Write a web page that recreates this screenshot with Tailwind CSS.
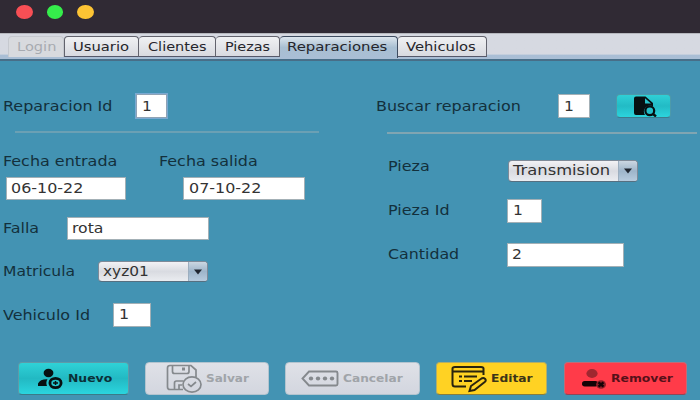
<!DOCTYPE html>
<html lang="es">
<head>
<meta charset="utf-8">
<title>Reparaciones</title>
<script src="https://cdn.jsdelivr.net/npm/@tailwindcss/browser@4"></script>
</head>
<body class="w-[700px] h-[400px] overflow-hidden bg-[#4393b3] font-['DejaVu_Sans',sans-serif] text-[13.2px] leading-none text-[#13303c] whitespace-nowrap">
<div class="flex flex-col h-[400px]">
  <header class="h-[33px] shrink-0 bg-[#302a34] flex gap-[14px] pl-4 pt-[5px]">
    <i class="w-[16.5px] h-[14px] rounded-[50%] bg-[#f84f55]"></i>
    <i class="w-[16.5px] h-[14px] rounded-[50%] bg-[#35ed4b]"></i>
    <i class="w-[16.5px] h-[14px] rounded-[50%] bg-[#fdc434]"></i>
  </header>
  <nav class="h-[28px] shrink-0 bg-linear-to-b from-[#d6d9e1] from-80% to-[#a9bed5] to-85% border-t border-[#b5b7bd] border-b-2 border-b-[#486e88] pt-[2px] pl-2 flex text-[12.4px] text-[#25252b]">
    <div class="w-[56px] h-[21px] rounded-t-[4px] border border-[#c6c9cf] border-b-0 bg-[#d8dade] text-[#a7aab0] pl-2 pt-[4px]"><span class="inline-block origin-left scale-x-[1.18]">Login</span></div>
    <div class="w-[75px] h-[21px] rounded-t-[4px] border border-[#62636d] border-b-[#55586a] bg-linear-to-b from-[#f0f1f3] to-[#d8dae0] pl-2 pt-[4px]"><span class="inline-block origin-left scale-x-[1.19]">Usuario</span></div>
    <div class="w-[77px] h-[21px] rounded-t-[4px] border border-l-0 border-[#62636d] border-b-[#55586a] bg-linear-to-b from-[#f0f1f3] to-[#d8dae0] pl-[9px] pt-[4px]"><span class="inline-block origin-left scale-x-[1.17]">Clientes</span></div>
    <div class="w-[64px] h-[21px] rounded-t-[4px] border border-l-0 border-[#62636d] border-b-[#55586a] bg-linear-to-b from-[#f0f1f3] to-[#d8dae0] pl-[9px] pt-[4px]"><span class="inline-block origin-left scale-x-[1.16]">Piezas</span></div>
    <div class="w-[118px] h-[22px] rounded-t-[4px] border border-l-0 border-b-0 border-[#3e4c60] bg-linear-to-b from-[#dce5ed] via-[#a8bfd2] via-50% to-[#a9bed5] pl-[7px] pt-[4px]"><span class="inline-block origin-left scale-x-[1.2]">Reparaciones</span></div>
    <div class="w-[89px] h-[21px] rounded-t-[4px] border border-l-0 border-[#62636d] border-b-[#55586a] bg-linear-to-b from-[#f0f1f3] to-[#d8dae0] pl-[8px] pt-[4px]"><span class="inline-block origin-left scale-x-[1.19]">Vehiculos</span></div>
  </nav>

  <main class="flex h-[301px] shrink-0">
    <section class="w-[376px] pl-[3px] pt-[33px]">
      <div class="flex items-center h-[24px]">
        <label class="w-[133px] pt-px"><span class="inline-block origin-left scale-x-[1.21]">Reparacion Id</span></label>
        <div class="w-[31px] h-[24px] bg-white border border-[#8fa3b5] ring-1 ring-[#79a9d2] pl-[5px] pt-[5px] text-[#333]"><span class="inline-block origin-left scale-x-[1.18]">1</span></div>
      </div>
      <div class="ml-3 mt-[13px] w-[304px] h-[2px] bg-[#6ba0b4]"></div>
      <div class="flex mt-[21px] h-[16px] pt-px">
        <label class="w-[156px]"><span class="inline-block origin-left scale-x-[1.21]">Fecha entrada</span></label>
        <label><span class="inline-block origin-left scale-x-[1.21]">Fecha salida</span></label>
      </div>
      <div class="flex mt-[7px] ml-[3px] gap-[57px] text-[13.5px] text-[#333]">
        <div class="w-[120px] h-[23px] bg-white border border-[#a3b0b6] pl-1 pt-[4px]"><span class="inline-block origin-left scale-x-[1.18]">06-10-22</span></div>
        <div class="w-[122px] h-[23px] bg-white border border-[#a3b0b6] pl-[5px] pt-[4px]"><span class="inline-block origin-left scale-x-[1.18]">07-10-22</span></div>
      </div>
      <div class="flex items-center mt-[17px] h-[23px]">
        <label class="w-[64px] pt-px"><span class="inline-block origin-left scale-x-[1.21]">Falla</span></label>
        <div class="w-[142px] h-[23px] bg-white border border-[#a3b0b6] pl-1 pt-[4px] text-[13.5px] text-[#333]"><span class="inline-block origin-left scale-x-[1.16]">rota</span></div>
      </div>
      <div class="flex items-center mt-[21px] h-[21px]">
        <label class="w-[95px] pt-px"><span class="inline-block origin-left scale-x-[1.18]">Matricula</span></label>
        <div class="w-[110px] h-[21px] rounded-[4px] border border-[#7e8a98] border-b-[#566f80] bg-linear-to-b from-[#f2f2f5] via-[#d9dbe1] to-[#eaecf0] flex overflow-hidden text-[13.5px] text-[#333]">
          <div class="flex-1 pl-1 pt-[3px]"><span class="inline-block origin-left scale-x-[1.14]">xyz01</span></div>
          <div class="w-[19px] bg-linear-to-b from-[#cbd7e2] via-[#9eb5ca] to-[#b7cbde] border-l border-[#9caebf] flex items-center justify-center"><svg width="8" height="6" viewBox="0 0 8 6"><path d="M0 .5h8L4 5.5z" fill="#202630"/></svg></div>
        </div>
      </div>
      <div class="flex items-center mt-[21px] h-[24px]">
        <label class="w-[110px] pt-px"><span class="inline-block origin-left scale-x-[1.21]">Vehiculo Id</span></label>
        <div class="w-[38px] h-[24px] bg-white border border-[#a3b0b6] pl-[5px] pt-[4px] text-[13.5px] text-[#333]"><span class="inline-block origin-left scale-x-[1.18]">1</span></div>
      </div>
    </section>

    <section class="w-[324px] pt-[33px]">
      <div class="flex items-center h-[24px]">
        <label class="w-[182px] pt-px"><span class="inline-block origin-left scale-x-[1.21]">Buscar reparacion</span></label>
        <div class="w-[32px] h-[24px] bg-white border border-[#a3b0b6] pl-[5px] pt-[5px] text-[#333]"><span class="inline-block origin-left scale-x-[1.18]">1</span></div>
        <div class="ml-[26px] w-[55px] h-[24px] rounded-[4px] border border-[#4d9aaa] border-b-[#3c7c8d] bg-linear-to-b from-[#2fd0d6] via-[#22bbc5] to-[#2cd4dd] flex items-center justify-center pl-[3px]">
          <svg width="24" height="21" viewBox="0 0 24 21"><path d="M3 .5h9.500L20 7v3.500a6 6 0 0 0-8 8.500H3q-2 0-2-2V2.500q0-2 2-2z" fill="#071012"/><path d="M12 2.200V7.500h6z" fill="#27c4cc"/><circle cx="16.800" cy="14.800" r="4.400" fill="#24bec8" stroke="#071012" stroke-width="2.200"/><path d="m19.500 17.500 3.500 3" stroke="#071012" stroke-width="2.400"/></svg>
        </div>
      </div>
      <div class="ml-[11px] mt-[14px] w-[310px] h-[2px] bg-[#80a5b2]"></div>
      <div class="flex ml-[12px] mt-[26px] h-[22px]">
        <label class="w-[120px]"><span class="inline-block origin-left scale-x-[1.21]">Pieza</span></label>
        <div class="w-[130px] h-[22px] rounded-[4px] border border-[#7e8a98] border-b-[#566f80] bg-linear-to-b from-[#f2f2f5] via-[#d9dbe1] to-[#eaecf0] flex overflow-hidden text-[13.5px] text-[#333]">
          <div class="flex-1 pl-[4px] pt-[3px]"><span class="inline-block origin-left scale-x-[1.21]">Transmision</span></div>
          <div class="w-[19px] bg-linear-to-b from-[#cbd7e2] via-[#9eb5ca] to-[#b7cbde] border-l border-[#9caebf] flex items-center justify-center"><svg width="8" height="6" viewBox="0 0 8 6"><path d="M0 .5h8L4 5.500z" fill="#202630"/></svg></div>
        </div>
      </div>
      <div class="flex items-center ml-[12px] mt-[17px] h-[23px]">
        <label class="w-[119px]"><span class="inline-block origin-left scale-x-[1.21]">Pieza Id</span></label>
        <div class="w-[35px] h-[24px] bg-white border border-[#a3b0b6] pl-[5px] pt-[4px] text-[#333]"><span class="inline-block origin-left scale-x-[1.18]">1</span></div>
      </div>
      <div class="flex items-center ml-[12px] mt-[21px] h-[23px]">
        <label class="w-[119px]"><span class="inline-block origin-left scale-x-[1.2]">Cantidad</span></label>
        <div class="w-[117px] h-[24px] bg-white border border-[#a3b0b6] pl-[4px] pt-[4px] text-[#333]"><span class="inline-block origin-left scale-x-[1.18]">2</span></div>
      </div>
    </section>
  </main>

  <footer class="flex h-[33px] ml-[18px] text-[10.5px] font-bold">
    <div class="w-[111px] rounded-[4px] border border-[#5e9ba8] border-b-[#3a7a88] bg-linear-to-b from-[#2fd2d7] via-[#22b9c3] to-[#2bd5de] flex items-center pl-[18px] text-[#0b3037]">
      <svg class="shrink-0" width="26" height="22" viewBox="0 0 26 22"><ellipse cx="11.500" cy="5" rx="4.900" ry="4.200" fill="#071012"/><path d="M1 18v-2.500q2-4.500 9.500-4.300-2 3-.5 6.800z" fill="#071012"/><ellipse cx="18.500" cy="15" rx="5.600" ry="4.700" fill="none" stroke="#071012" stroke-width="2.800"/><path d="M16 15h5M18.500 13v4" stroke="#071012" stroke-width="1.500"/></svg>
      <span class="ml-[5px] inline-block origin-left scale-x-[1.18]">Nuevo</span>
    </div>
    <div class="ml-4 w-[124px] rounded-[4px] border border-[#b3c4cf] bg-linear-to-b from-[#dfe1e7] to-[#d3d6df] flex items-center pl-[20px] text-[#a0a4a9]">
      <svg class="shrink-0" width="37" height="30" viewBox="0 0 37 30" fill="none" stroke="#85898d" stroke-width="1.700"><path d="M17 25.500H4q-2.500 0-2.500-2.500V4q0-2.500 2.500-2.500h21l5 4.500V13M6.500 1.500v6q0 2 2 2H21q2 0 2-2v-6M8.500 25v-6q0-2 2-2h7M13 25v-4h3"/><path d="M17.500 3.500v3" stroke-width="3"/><ellipse cx="26" cy="20.500" rx="9" ry="7.700"/><path d="m22 20 3 2.500 5-4.500"/></svg>
      <span class="ml-[3px] inline-block origin-left scale-x-[1.15]">Salvar</span>
    </div>
    <div class="ml-4 w-[135px] rounded-[4px] border border-[#b3c4cf] bg-linear-to-b from-[#dfe1e7] to-[#d3d6df] flex items-center pl-[15px] text-[#a0a4a9]">
      <svg class="shrink-0" width="38" height="17" viewBox="0 0 38 17"><path d="M8 1.500h27q1.500 0 1.500 1.500v11q0 1.500-1.500 1.500H8L1.500 8.500z" fill="none" stroke="#85898d" stroke-width="1.900"/><g fill="#85898d"><ellipse cx="10" cy="8.500" rx="2.200" ry="1.900"/><ellipse cx="17" cy="8.500" rx="2.200" ry="1.900"/><ellipse cx="24" cy="8.500" rx="2.200" ry="1.900"/><ellipse cx="31" cy="8.500" rx="2.200" ry="1.900"/></g></svg>
      <span class="ml-[4px] inline-block origin-left scale-x-[1.16]">Cancelar</span>
    </div>
    <div class="ml-4 w-[111px] rounded-[4px] border border-[#b2ae68] border-b-[#857d40] bg-[#ffd223] flex items-center pl-[14px] text-[#3c3418]">
      <svg class="shrink-0" width="37" height="28" viewBox="0 0 37 28" fill="none" stroke="#29230e" stroke-width="2"><path d="M15 21.500H4q-2.500 0-2.500-2.500V3.500Q1.500 2 4 2h26q2.500 0 2.500 1.500V10M2 6.500h30M8 11.500h3M13 11.500h13M8 16h3M13 16h8"/><path d="m18.500 26 1.500-5L30.500 13.500q2-1 3.700.5 1.300 1.500-.5 3L23.500 25z"/></svg>
      <span class="ml-[3px] inline-block origin-left scale-x-[1.17]">Editar</span>
    </div>
    <div class="ml-[17px] w-[123px] rounded-[4px] border border-[#bd6d79] border-b-[#8f4657] bg-[#ff3b49] flex items-center pl-[16px] text-[#571019]">
      <svg class="shrink-0" width="26" height="20" viewBox="0 0 26 20"><ellipse cx="11" cy="4.500" rx="5.600" ry="4.400" fill="#9f2730"/><rect x="1" y="12" width="16" height="5.500" rx="2.700" fill="#130306"/><ellipse cx="20" cy="15.500" rx="5" ry="4.300" fill="#8a1f29"/><path d="m17.500 13.300 5 4.400M22.500 13.300l-5 4.400" stroke="#130306" stroke-width="2.400"/></svg>
      <span class="ml-[4px] inline-block origin-left scale-x-[1.18]">Remover</span>
    </div>
  </footer>
</div>
</body>
</html>
